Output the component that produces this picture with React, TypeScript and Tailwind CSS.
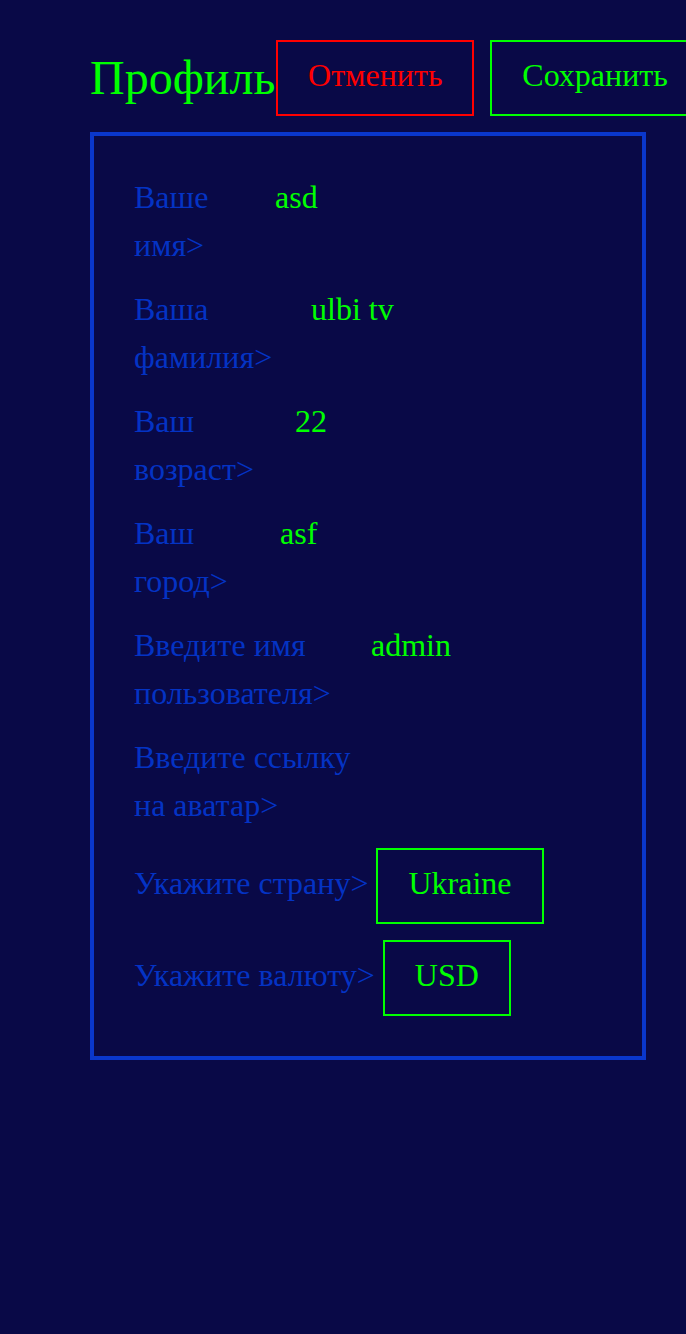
const serif = { fontFamily: '"Liberation Serif", "Times New Roman", serif' };

type Field = { label: string; value: string; w: string };

const fields: Field[] = [
  { label: "Ваше имя>", value: "asd", w: "w-[141px]" },
  { label: "Ваша фамилия>", value: "ulbi tv", w: "w-[177px]" },
  { label: "Ваш возраст>", value: "22", w: "w-[161px]" },
  { label: "Ваш город>", value: "asf", w: "w-[146px]" },
  { label: "Введите имя пользователя>", value: "admin", w: "w-[237px]" },
  { label: "Введите ссылку на аватар>", value: "", w: "w-[237px]" },
];

function Select({ label, value }: { label: string; value: string }) {
  return (
    <div className="flex items-baseline gap-2">
      <span className="text-[#0433c4]">{label}</span>
      <div className="border-2 border-[#00ff00] px-[30px] pt-[9px] pb-[15px] text-[#00ff00]">
        {value}
      </div>
    </div>
  );
}

export default function App() {
  return (
    <div
      className="min-h-[1334px] w-[686px] overflow-hidden bg-[#090947] pl-[90px] pt-[40px] text-[32px] leading-[48px]"
      style={serif}
    >
      <div className="flex items-center whitespace-nowrap">
        <h1 className="text-[48px] leading-[76px] text-[#00ff00] mr-px">Профиль</h1>
        <button className="w-[198px] flex justify-center border-2 border-[#ff0000] text-[#ff0000] pt-[9px] pb-[15px] shrink-0">
          Отменить
        </button>
        <button className="ml-4 border-2 border-[#00ff00] text-[#00ff00] px-[30px] pt-[9px] pb-[15px] shrink-0">
          Сохранить
        </button>
      </div>
      <div className="mt-4 w-[556px] border-4 border-[#0a37cc] px-10 pt-[37px] pb-10 flex flex-col gap-4">
        {fields.map((f) => (
          <div key={f.label} className="flex items-start">
            <span className={`${f.w} shrink-0 text-[#0433c4]`}>{f.label}</span>
            <span className="text-[#00ff00]">{f.value}</span>
          </div>
        ))}
        <div className="mt-[3px] flex flex-col gap-4">
          <Select label="Укажите страну>" value="Ukraine" />
          <Select label="Укажите валюту>" value="USD" />
        </div>
      </div>
    </div>
  );
}
